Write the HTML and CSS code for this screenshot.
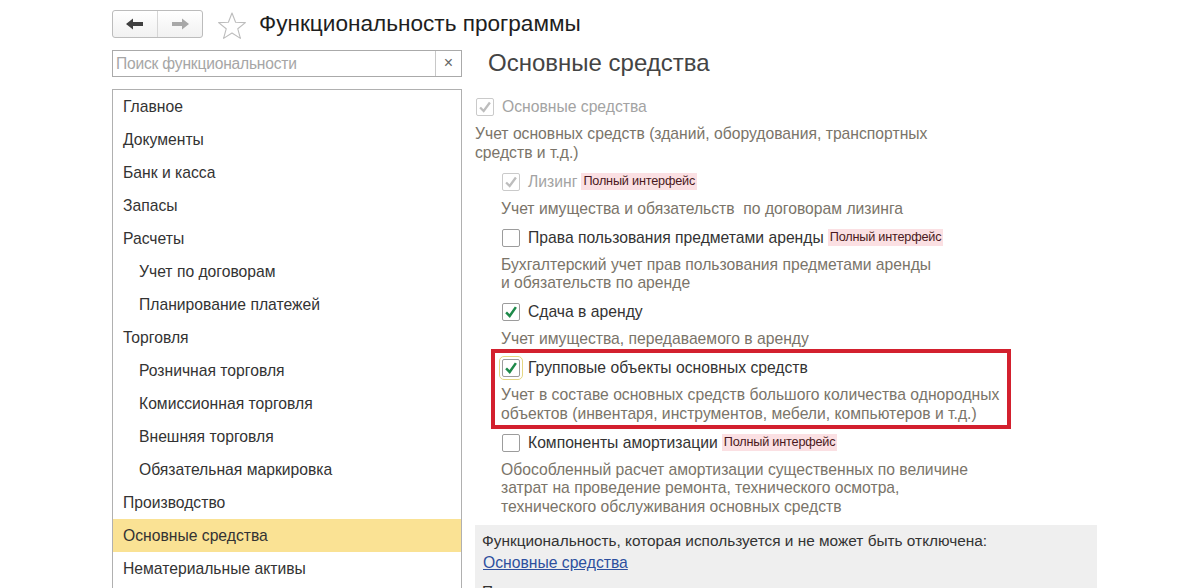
FILE: index.html
```html
<!DOCTYPE html>
<html lang="ru">
<head>
<meta charset="utf-8">
<title>Функциональность программы</title>
<link rel="stylesheet" href="styles.css">
</head>
<body>
<div class="page">
  <header class="topbar">
    <div class="navgroup">
      <button class="navbtn" aria-label="Назад">
        <svg width="18" height="12" viewBox="0 0 18 12"><path d="M0 6 L7 0.5 V4 H17 V8 H7 V11.5 Z" fill="#404040"/></svg>
      </button>
      <button class="navbtn" aria-label="Вперед">
        <svg width="18" height="12" viewBox="0 0 18 12"><path d="M18 6 L11 0.5 V4 H1 V8 H11 V11.5 Z" fill="#a8a8a8"/></svg>
      </button>
    </div>
    <svg class="star" width="30" height="30" viewBox="0 0 30 30"><path d="M15 2 L18.6 11.2 L28.4 11.6 L20.8 17.8 L23.4 27.4 L15 22 L6.6 27.4 L9.2 17.8 L1.6 11.6 L11.4 11.2 Z" fill="none" stroke="#bdbdbd" stroke-width="1.1" stroke-linejoin="round"/></svg>
    <h1 class="title">Функциональность программы</h1>
  </header>

  <div class="main">
    <aside class="sidebar">
      <div class="search">
        <span class="search-input">Поиск функциональности</span>
        <span class="search-clear">×</span>
      </div>
      <ul class="sections">
        <li class="sec">Главное</li>
        <li class="sec">Документы</li>
        <li class="sec">Банк и касса</li>
        <li class="sec">Запасы</li>
        <li class="sec">Расчеты</li>
        <li class="sec sub">Учет по договорам</li>
        <li class="sec sub">Планирование платежей</li>
        <li class="sec">Торговля</li>
        <li class="sec sub">Розничная торговля</li>
        <li class="sec sub">Комиссионная торговля</li>
        <li class="sec sub">Внешняя торговля</li>
        <li class="sec sub">Обязательная маркировка</li>
        <li class="sec">Производство</li>
        <li class="sec active">Основные средства</li>
        <li class="sec">Нематериальные активы</li>
      </ul>
    </aside>

    <section class="content">
      <h2 class="heading">Основные средства</h2>

      <div class="item">
        <div class="row">
          <span class="cb disabled checked"><svg viewBox="0 0 18 18"><path d="M3.5 9.5 L7.5 13.5 L14.5 4" fill="none" stroke="#bdbdbd" stroke-width="2.6"/></svg></span>
          <span class="label dim">Основные средства</span>
        </div>
        <p class="desc">Учет основных средств (зданий, оборудования, транспортных<br>средств и т.д.)</p>
      </div>

      <div class="nested">
        <div class="item">
          <div class="row">
            <span class="cb disabled checked"><svg viewBox="0 0 18 18"><path d="M3.5 9.5 L7.5 13.5 L14.5 4" fill="none" stroke="#bdbdbd" stroke-width="2.6"/></svg></span>
            <span class="label dim">Лизинг</span>
            <span class="badge">Полный интерфейс</span>
          </div>
          <p class="desc">Учет имущества и обязательств&nbsp; по договорам лизинга</p>
        </div>

        <div class="item">
          <div class="row">
            <span class="cb"></span>
            <span class="label">Права пользования предметами аренды</span>
            <span class="badge">Полный интерфейс</span>
          </div>
          <p class="desc">Бухгалтерский учет прав пользования предметами аренды<br>и обязательств по аренде</p>
        </div>

        <div class="item">
          <div class="row">
            <span class="cb checked"><svg viewBox="0 0 18 18"><path d="M3.5 9.5 L7.5 13.5 L14.5 3.5" fill="none" stroke="#1e8a4a" stroke-width="2.8"/></svg></span>
            <span class="label">Сдача в аренду</span>
          </div>
          <p class="desc">Учет имущества, передаваемого в аренду</p>
        </div>

        <div class="item marked">
          <div class="row">
            <span class="cb checked focus"><svg viewBox="0 0 18 18"><path d="M3.5 9.5 L7.5 13.5 L14.5 3.5" fill="none" stroke="#1e8a4a" stroke-width="2.8"/></svg></span>
            <span class="label">Групповые объекты основных средств</span>
          </div>
          <p class="desc">Учет в составе основных средств большого количества однородных<br>объектов (инвентаря, инструментов, мебели, компьютеров и т.д.)</p>
        </div>

        <div class="item">
          <div class="row">
            <span class="cb"></span>
            <span class="label">Компоненты амортизации</span>
            <span class="badge">Полный интерфейс</span>
          </div>
          <p class="desc">Обособленный расчет амортизации существенных по величине<br>затрат на проведение ремонта, технического осмотра,<br>технического обслуживания основных средств</p>
        </div>
      </div>

      <div class="info">
        <p class="info-text">Функциональность, которая используется и не может быть отключена:</p>
        <a class="info-link" href="#">Основные средства</a>
        <p class="info-text">Производство</p>
      </div>
    </section>
  </div>
</div>
</body>
</html>
```

FILE: styles.css
```css
*, *::before, *::after { box-sizing: border-box; }

html, body {
  margin: 0;
  padding: 0;
  background: #ffffff;
  overflow: hidden;
}

body {
  font-family: "Liberation Sans", Arial, sans-serif;
  font-size: 15.7px;
  color: #333333;
}

.page {
  padding: 10px 0 0 112px;
}

/* ---------- top bar ---------- */
.topbar {
  display: flex;
  align-items: center;
  height: 28px;
}

.navgroup {
  display: flex;
  width: 91px;
  height: 28px;
  border: 1px solid #bcbcbc;
  border-radius: 3px;
  background: linear-gradient(#ffffff, #f1f1f1);
  overflow: hidden;
}

.navbtn {
  flex: 1;
  display: flex;
  align-items: center;
  justify-content: center;
  border: 0;
  padding: 0;
  background: transparent;
}

.navbtn + .navbtn {
  border-left: 1px solid #d6d6d6;
}

.star {
  margin-left: 14px;
  margin-top: 3px;
}

.title {
  margin: 0 0 0 12px;
  font-size: 22.6px;
  font-weight: normal;
  color: #1e1e1e;
  line-height: 28px;
}

/* ---------- main ---------- */
.main {
  display: flex;
  gap: 13px;
  margin-top: 12px;
}

.sidebar {
  width: 350px;
  flex: none;
}

.search {
  display: flex;
  height: 27px;
  border: 1px solid #aaaaaa;
}

.search-input {
  flex: 1;
  padding-left: 3px;
  line-height: 25px;
  color: #a6a6a6;
  font-size: 15.6px;
  letter-spacing: -0.2px;
}

.search-clear {
  width: 26px;
  border-left: 1px solid #c8c8c8;
  text-align: center;
  line-height: 24px;
  color: #666666;
  font-size: 16px;
}

.sections {
  list-style: none;
  margin: 12px 0 0;
  padding: 0;
  border: 1px solid #b0b0b0;
  height: 520px;
}

.sec {
  height: 33px;
  line-height: 33px;
  padding-left: 10px;
  color: #333333;
}

.sec.sub {
  padding-left: 26px;
}

.sec.active {
  background: #fae294;
}

/* ---------- content ---------- */
.content {
  width: 622px;
  flex: none;
}

.heading {
  margin: 0 0 20px 13px;
  font-size: 24px;
  font-weight: normal;
  color: #444444;
  line-height: 26px;
}

.item {
  margin-bottom: 8.5px;
}

.nested {
  padding-left: 26px;
}

.row {
  display: flex;
  align-items: center;
  height: 22px;
  padding-left: 1px;
}

.cb {
  flex: none;
  width: 18px;
  height: 18px;
  border: 1px solid #9c9c9c;
  border-radius: 2px;
  background: #ffffff;
  display: flex;
  align-items: center;
  justify-content: center;
}

.cb svg {
  width: 16px;
  height: 16px;
}

.cb.disabled {
  border-color: #cacaca;
}

.cb.focus {
  outline: 1px solid #e4d783;
  outline-offset: 2px;
}

.label {
  margin-left: 8px;
  color: #333333;
}

.label.dim {
  color: #a3a3a3;
}

.badge {
  margin-left: 4px;
  padding: 0 2px;
  background: #fbe0e3;
  color: #4a1820;
  font-size: 12.7px;
  line-height: 17px;
  letter-spacing: -0.2px;
}

.desc {
  margin: 7px 0 0;
  line-height: 18.5px;
  color: #7a7469;
}

.item.marked {
  position: relative;
}

.item.marked::after {
  content: "";
  position: absolute;
  top: -8px;
  left: -10px;
  width: 520px;
  height: 80px;
  border: 4px solid #d3202e;
  pointer-events: none;
}

.info {
  background: #efefef;
  padding: 6px 7px 0;
  height: 80px;
}

.info-text {
  margin: 0;
  line-height: 20px;
  font-size: 15.4px;
  color: #333333;
}

.info-link {
  display: block;
  margin: 2px 0 8px 1px;
  line-height: 20px;
  color: #2d4f9e;
  text-decoration: underline;
}
```
